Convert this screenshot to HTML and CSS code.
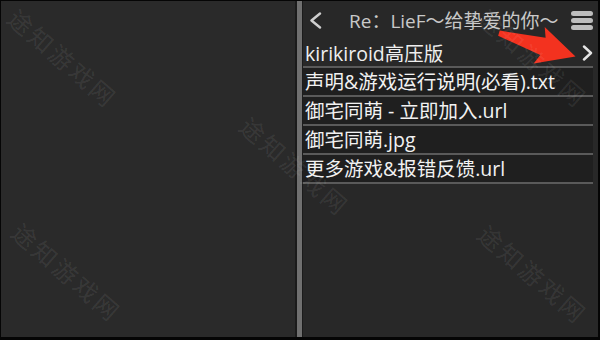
FILE: index.html
```html
<!DOCTYPE html>
<html lang="zh">
<head>
<meta charset="utf-8">
<title>Re：LieF～给挚爱的你～</title>
<link rel="stylesheet" href="styles.css">
</head>
<body>
<div class="screen">
  <div class="left"></div>
  <div class="divider"></div>
  <div class="right">
    <div class="header">
      <svg class="back" viewBox="0 0 13 17" width="13" height="17"><polyline points="11,1.5 2.5,8.5 11,15.5" fill="none" stroke="#cfcfcf" stroke-width="2.4" stroke-linecap="round" stroke-linejoin="round"/></svg>
      <div class="title">Re：LieF～给挚爱的你～</div>
      <svg class="menu" viewBox="0 0 22 19" width="22" height="19"><rect x="0" y="0" width="22" height="5" rx="2.5" fill="#bdbdbd"/><rect x="0" y="7" width="22" height="5" rx="2.5" fill="#bdbdbd"/><rect x="0" y="14" width="22" height="5" rx="2.5" fill="#bdbdbd"/></svg>
    </div>
    <div class="path-row">
      <span class="path">kirikiroid高压版</span>
      <svg class="fwd" viewBox="0 0 11 16" width="11" height="16"><polyline points="2,1.5 9,8 2,14.5" fill="none" stroke="#e6e6e6" stroke-width="2.4" stroke-linecap="round" stroke-linejoin="round"/></svg>
    </div>
    <ul class="files">
      <li>声明&amp;游戏运行说明(必看).txt</li>
      <li>御宅同萌 - 立即加入.url</li>
      <li>御宅同萌.jpg</li>
      <li>更多游戏&amp;报错反馈.url</li>
    </ul>
  </div>
  <svg class="arrow" viewBox="0 0 600 340" width="600" height="340"><g transform="translate(499 33) rotate(17)"><polygon points="0,-2.5 46,-9 42,-19 80,0 42,19 46,9 0,3" fill="#f3321f"/></g></svg>
  <div class="marks">
    <span class="mark m1">途知游戏网</span>
    <span class="mark m2">途知游戏网</span>
    <span class="mark m3">途知游戏网</span>
    <span class="mark m4">途知游戏网</span>
    <span class="mark m5">途知游戏网</span>
  </div>
</div>
</body>
</html>
```
FILE: styles.css
```css
html, body {
  margin: 0;
  padding: 0;
  background: #000;
}
.screen {
  position: relative;
  width: 600px;
  height: 340px;
  box-sizing: border-box;
  border-style: solid;
  border-color: #050505;
  border-width: 1px 2px 3px 1px;
  display: flex;
  overflow: hidden;
  font-family: "Open Sans", "Noto Sans CJK SC", sans-serif;
}
.left {
  width: 294px;
  background: #2a2a2a;
}
.divider {
  width: 5px;
  background: #707070;
  border-left: 2px solid #1b1b1b;
  border-right: 1px solid #1b1b1b;
}
.right {
  flex: 1;
  background: #282828;
  display: flex;
  flex-direction: column;
}
.header {
  height: 38px;
  display: flex;
  align-items: center;
  padding: 0 6px;
}
.back {
  display: block;
}
.title {
  margin-left: 27px;
  font-size: 19px;
  color: #c9c9c9;
  white-space: nowrap;
}
.menu {
  display: block;
  margin-left: auto;
  margin-right: -1px;
}
.path-row {
  height: 27px;
  display: flex;
  align-items: center;
  padding-left: 2px;
  padding-right: 5px;
  font-size: 19.5px;
  color: #efefef;
}
.fwd {
  display: block;
  margin-left: auto;
}
.files {
  list-style: none;
  margin: 0 5px 0 0;
  padding: 0;
}
.files li {
  height: 27px;
  line-height: 27px;
  border-top: 2px solid #5a5a5a;
  padding-left: 2px;
  background: #1f1f1f;
  font-size: 19.5px;
  color: #f2f2f2;
  white-space: nowrap;
}
.files li:last-child {
  border-bottom: 2px solid #5a5a5a;
}
.arrow {
  position: absolute;
  left: -1px;
  top: -1px;
  pointer-events: none;
}
.marks {
  position: absolute;
  left: -1px;
  top: -1px;
  width: 600px;
  height: 340px;
  pointer-events: none;
}
.mark {
  position: absolute;
  font-family: "Noto Sans CJK SC", sans-serif;
  font-size: 24px;
  letter-spacing: 3px;
  line-height: 1;
  color: rgba(255, 255, 255, 0.085);
  white-space: nowrap;
  transform: translate(-50%, -50%) rotate(41deg);
}
.m1 { left: 63px; top: 58px; }
.m2 { left: 295px; top: 166px; }
.m3 { left: 67px; top: 272px; }
.m4 { left: 533px; top: 58px; }
.m5 { left: 533px; top: 274px; }
```
